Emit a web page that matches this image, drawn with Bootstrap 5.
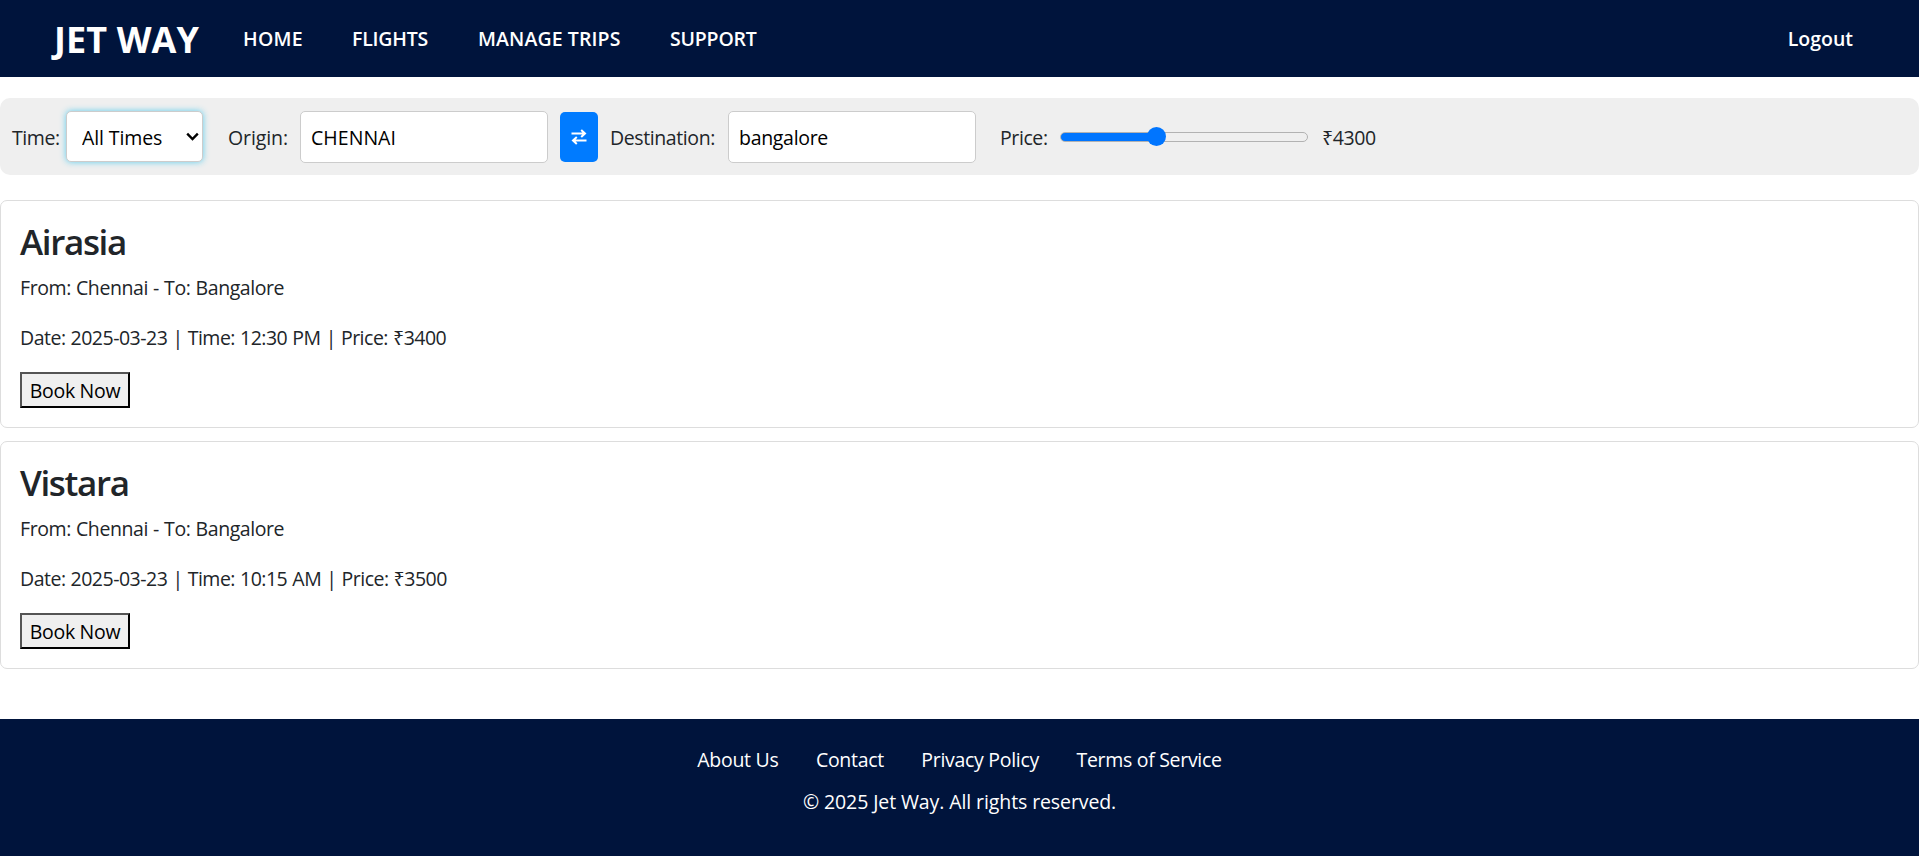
<!DOCTYPE html>
<html lang="en">
<head>
<meta charset="utf-8">
<meta name="viewport" content="width=device-width, initial-scale=1">
<title>Jet Way</title>
<link href="https://cdn.jsdelivr.net/npm/bootstrap@5.3.0/dist/css/bootstrap.min.css" rel="stylesheet">
<style>
  body { font-family: "Open Sans", "Noto Sans", sans-serif; font-size: 19.5px; line-height: 30px; color: #212529; height: 856px; overflow: hidden; }
  .jet-bar { height: 77px; background: #00143c; padding: 0 66px 0 52px; }
  .jet-bar a, .jet-foot a { color: #fff; text-decoration: none; white-space: nowrap; }
  .jet-bar .jet-brand { width: 191px; font-size: 36px; font-weight: 700; letter-spacing: .1px; line-height: 54px; padding: 2px 0 0 2px; }
  .jet-links a { font-weight: 600; font-size: 19.5px; }
  .filters { height: 77px; margin-top: 21px; padding: 0 12px; background: #efefef; border-radius: 10px; }
  .filters label, .price-value { white-space: nowrap; letter-spacing: -.4px; flex: none; padding-top: 2px; }
  .filters input[type=text], .filters select { height: 52px; border: 1px solid #ccc; border-radius: 5px; background: #fff; color: #000; outline: 0; }
  .filters input[type=text] { width: 248px; padding: 2px 10px 0; }
  .filters select { width: 137px; height: 51px; padding: 3px 15px 0; appearance: none; letter-spacing: -.1px; box-shadow: 0 0 6px rgba(81,203,238,.9); }
  .time-box { position: relative; width: 162px; margin-top: -1px; }
  .time-box svg { position: absolute; left: 120px; top: 21px; pointer-events: none; }
  .swap { width: 38px; height: 50px; margin: 0 12px 0 12px; border: 0; border-radius: 5px; background: #007bff; padding: 0; flex: none; }
  .price-range { appearance: none; width: 248px; height: 20px; margin: 0; background: none; flex: none; }
  .price-range::-webkit-slider-runnable-track { height: 10px; border: 1px solid #b2b2b2; border-radius: 5px; background: linear-gradient(90deg, #0075ff 96px, #efefef 96px) border-box; box-shadow: none; }
  .price-range::-webkit-slider-thumb { appearance: none; width: 19px; height: 19px; margin-top: -5.5px; border-radius: 50%; background: #0075ff; }
  .flight { height: 228px; padding: 19px 19px; border: 1px solid #ddd; border-radius: 7px; }
  .flight h2 { font-size: 35px; font-weight: 600; line-height: 43px; letter-spacing: -1.35px; margin: 0 0 10px; }
  .flight p { margin: 0 0 20px; letter-spacing: -.42px; word-spacing: .5px; }
  .flight .date-line { letter-spacing: -.5px; margin-bottom: 19px; }
  .flight button { display: block; width: 110px; height: 36px; padding: 0; border: 2px outset #000; background: #efefef; color: #000; line-height: 34px; letter-spacing: -.3px; white-space: nowrap; border-radius: 0; }
  .jet-foot { height: 137px; margin-top: 50px; padding-top: 26px; background: #00143c; color: #fff; font-weight: 500; }
  .jet-foot a { letter-spacing: -.3px; }
</style>
</head>
<body>
<nav class="jet-bar d-flex align-items-center">
  <a class="jet-brand" href="#">JET WAY</a>
  <div class="jet-links d-flex flex-grow-1">
    <a href="#" style="width:109px;letter-spacing:.3px">HOME</a>
    <a href="#" style="width:126px;letter-spacing:-.2px">FLIGHTS</a>
    <a href="#" style="width:192px;letter-spacing:.1px">MANAGE TRIPS</a>
    <a href="#" style="letter-spacing:-.2px">SUPPORT</a>
    <a href="#" class="ms-auto">Logout</a>
  </div>
</nav>

<section class="filters d-flex align-items-center">
  <label for="time" style="width:54px">Time:</label>
  <div class="time-box">
    <select id="time"><option>All Times</option></select>
    <svg width="13" height="10" viewBox="0 0 13 10" fill="none" stroke="#000" stroke-width="2.4"><path d="M1.2 1.7 6.5 7 11.8 1.7"/></svg>
  </div>
  <label for="from" style="width:72px;letter-spacing:-.1px">Origin:</label>
  <input type="text" id="from" value="CHENNAI" style="letter-spacing:.05px">
  <button class="swap d-flex align-items-center justify-content-center" type="button" aria-label="Swap">
    <svg width="16" height="17" viewBox="0 0 16 17" fill="none" stroke="#fff" stroke-width="2"><path d="M.5 5.5H14M10.2 2 14 5.5 10.2 9M15.5 12.5H2M5.8 9 2 12.5 5.8 16"/></svg>
  </button>
  <label for="to" style="width:118px">Destination:</label>
  <input type="text" id="to" value="bangalore" style="letter-spacing:-.3px">
  <label for="price" style="width:60px;margin-left:24px">Price:</label>
  <input type="range" id="price" class="price-range" min="500" max="10550" value="4300">
  <span class="price-value" style="margin-left:14px">₹4300</span>
</section>

<main class="d-grid" style="gap:13px;margin-top:25px">
  <article class="flight">
    <h2>Airasia</h2>
    <p>From: Chennai - To: Bangalore</p>
    <p class="date-line">Date: 2025-03-23 | Time: 12:30 PM | Price: ₹3400</p>
    <button type="button">Book Now</button>
  </article>
  <article class="flight">
    <h2>Vistara</h2>
    <p>From: Chennai - To: Bangalore</p>
    <p class="date-line">Date: 2025-03-23 | Time: 10:15 AM | Price: ₹3500</p>
    <button type="button">Book Now</button>
  </article>
</main>

<footer class="jet-foot text-center">
  <div class="d-flex justify-content-center" style="gap:37.5px">
    <a href="#">About Us</a>
    <a href="#">Contact</a>
    <a href="#">Privacy Policy</a>
    <a href="#">Terms of Service</a>
  </div>
  <div style="margin-top:12px;letter-spacing:-.1px">© 2025 Jet Way. All rights reserved.</div>
</footer>
<script src="https://cdn.jsdelivr.net/npm/bootstrap@5.3.0/dist/js/bootstrap.bundle.min.js"></script>
</body>
</html>
